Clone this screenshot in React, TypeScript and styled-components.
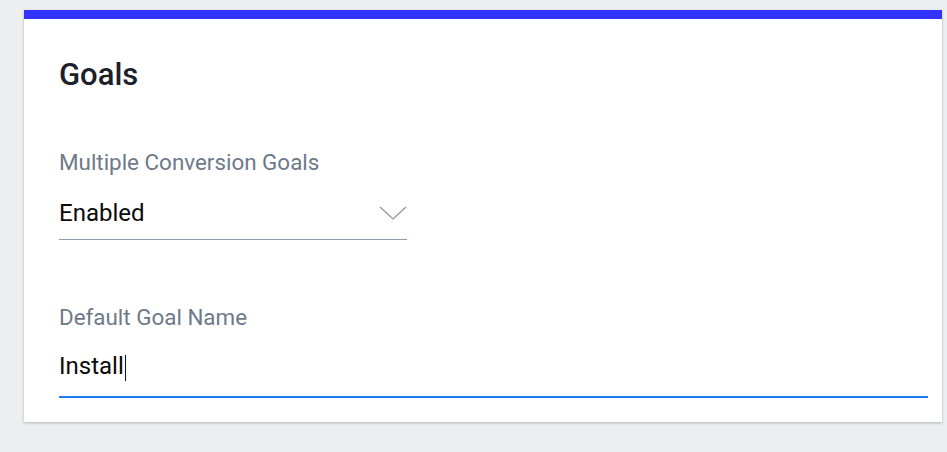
import React from "react";
import styled, { createGlobalStyle } from "styled-components";

const Global = createGlobalStyle`
  html, body { margin: 0; padding: 0; background: #edeef0; }
  body { font-family: Roboto, "Noto Sans", Arial, sans-serif; -webkit-font-smoothing: antialiased; }
  * { box-sizing: border-box; }
`;

const Page = styled.div`
  padding: 10px 5px 30px 24px;
  width: 947px;
  height: 452px;
`;

const Card = styled.section`
  background: #ffffff;
  border-top: 9px solid #3333ff;
  box-shadow: 0 1px 3px rgba(0, 0, 0, 0.18), 0 1px 2px rgba(0, 0, 0, 0.08);
  padding: 38px 14px 26px 35px;
  height: 412px;
`;

const Title = styled.h2`
  margin: 0;
  font-size: 31px;
  line-height: 36px;
  font-weight: 500;
  color: #1b2029;
`;

const Field = styled.div<{ $width?: string; $top: number }>`
  margin-top: ${(p) => p.$top}px;
  width: ${(p) => p.$width ?? "100%"};
`;

const Label = styled.div`
  font-size: 22.4px;
  line-height: 26px;
  color: #6e7a8a;
`;

const Control = styled.div<{ $focused?: boolean }>`
  display: flex;
  align-items: center;
  justify-content: space-between;
  padding: ${(p) => (p.$focused ? "22px 0 16px" : "24px 0 12px")};
  border-bottom: ${(p) => (p.$focused ? "2px solid #1a7ff0" : "1px solid #8f9bab")};
`;

const Value = styled.span`
  font-size: 24px;
  line-height: 28px;
  color: #0a0a0a;
  display: inline-flex;
  align-items: center;
`;

const Caret = styled.span`
  display: inline-block;
  width: 1.5px;
  height: 26px;
  background: #111;
  margin-left: 1px;
  transform: translateY(2px);
`;

const Chevron = () => (
  <svg width="28" height="14" viewBox="0 0 28 14" fill="none">
    <path d="M1 1 L14 13 L27 1" stroke="#8a94a3" strokeWidth="1.2" />
  </svg>
);

export default function App() {
  return (
    <>
      <Global />
      <Page>
        <Card>
          <Title>Goals</Title>
          <Field $width="348px" $top={56}>
            <Label>Multiple Conversion Goals</Label>
            <Control>
              <Value>Enabled</Value>
              <Chevron />
            </Control>
          </Field>
          <Field $top={64}>
            <Label>Default Goal Name</Label>
            <Control $focused>
              <Value>
                Install
                <Caret />
              </Value>
            </Control>
          </Field>
        </Card>
      </Page>
    </>
  );
}
